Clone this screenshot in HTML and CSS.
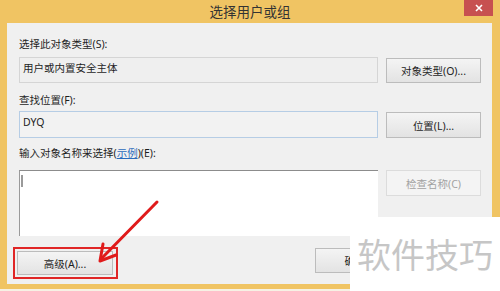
FILE: index.html
```html
<!DOCTYPE html>
<html lang="zh-CN">
<head>
  <meta charset="UTF-8" />
  <title>选择用户或组</title>
  <link rel="stylesheet" href="styles.css">
</head>
<body>

  <div class="window">
    <div class="titlebar">
      <span class="title">选择用户或组</span>
      <span class="close">
        <svg width="8" height="8" viewBox="0 0 8 8"><path d="M1 1L7 7M7 1L1 7" stroke="#fff" stroke-width="1.6"/></svg>
      </span>
    </div>

    <div class="panel">
      <div class="label first">选择此对象类型(S):</div>
      <div class="row">
        <div class="field readonly">用户或内置安全主体</div>
        <button class="btn">对象类型(O)...</button>
      </div>

      <div class="label second">查找位置(F):</div>
      <div class="row">
        <div class="field location">DYQ</div>
        <button class="btn tall">位置(L)...</button>
      </div>

      <div class="label third">输入对象名称来选择(<span class="link">示例</span>)(E):</div>
      <div class="row">
        <div class="listbox"><span class="caret"></span></div>
        <button class="btn disabled">检查名称(C)</button>
      </div>

      <div class="bottom">
        <div class="highlight">
          <button class="btn wide">高级(A)...</button>
        </div>
        <div class="actions">
          <button class="btn small">确定</button>
        </div>
      </div>
    </div>
  </div>

  <!-- overlays: annotation arrow and watermark -->
  <svg class="arrow" width="500" height="291" viewBox="0 0 500 291">
    <path d="M157 202L101 259" stroke="#e01b1b" stroke-width="3" stroke-linecap="round" fill="none"/>
    <path d="M103 244L100 261L116 255" stroke="#e01b1b" stroke-width="3" stroke-linecap="round" stroke-linejoin="round" fill="none"/>
  </svg>

  <div class="watermark">软件技巧</div>

</body>
</html>
```

FILE: styles.css
```css
body {
  margin: 0;
  width: 500px;
  height: 291px;
  overflow: hidden;
  position: relative;
  background: #f6f1e4;
  font-family: "Noto Sans", "Noto Sans CJK SC", sans-serif;
  font-size: 10.5px;
  color: #1e1e1e;
}

.window {
  background: #f0c463;
  height: 289px;
  display: flex;
  flex-direction: column;
}

.titlebar {
  position: relative;
  height: 23px;
  display: flex;
  justify-content: center;
  align-items: center;
}

.title {
  font-family: "Noto Sans CJK SC", sans-serif;
  font-size: 13.5px;
  line-height: 23px;
  color: #333;
}

.close {
  position: absolute;
  top: 0;
  right: 7px;
  width: 29px;
  height: 16px;
  background: #c75050;
  display: flex;
  align-items: center;
  justify-content: center;
}

.panel {
  background: #f0f0f0;
  height: 261px;
  margin: 0 8px 0 7px;
  padding: 14px 11px 0 12px;
  box-sizing: border-box;
}

.label {
  height: 14px;
  line-height: 14px;
  white-space: nowrap;
}

.label.first { margin-bottom: 6px; }
.label.second { margin-top: 10px; margin-bottom: 4px; }
.label.third { margin-top: 8px; margin-bottom: 10px; }

.link {
  color: #2a6bbd;
  text-decoration: underline;
}

.row {
  display: flex;
  gap: 8px;
  align-items: flex-start;
}

.field {
  width: 359px;
  height: 26px;
  box-sizing: border-box;
  padding: 3px 3px;
  line-height: 14px;
  background: #efefef;
  border: 1px solid #d5d5d5;
}

.field.location {
  height: 27px;
  background: #f2f2f2;
  border-color: #b6cde5;
}

.listbox {
  width: 359px;
  height: 66px;
  box-sizing: border-box;
  background: #fff;
  border-top: 1px solid #8c8c8c;
  border-left: 1px solid #9a9a9a;
  padding: 4px 0 0 1px;
}

.caret {
  display: block;
  width: 2px;
  height: 12px;
  background: #9a9a9a;
}

.btn {
  width: 95px;
  height: 25px;
  margin-top: 1px;
  padding: 0;
  font-family: inherit;
  font-size: 10.5px;
  color: #1e1e1e;
  background: linear-gradient(#f4f4f4, #e3e3e3);
  border: 1px solid #bcbcbc;
  border-radius: 0;
}

.btn.tall { height: 26px; }

.btn.disabled {
  margin-top: 0;
  height: 26px;
  color: #a2a2a2;
  background: #f4f4f4;
  border-color: #dcdcdc;
}

.bottom {
  display: flex;
  align-items: flex-start;
  margin-top: 11px;
}

.highlight {
  margin-left: -6px;
  padding: 2px 3px 2px 2px;
  border: 2px solid #e02626;
}

.btn.wide {
  display: block;
  width: 96px;
  height: 24px;
  margin: 0;
}

.actions {
  display: flex;
  margin-left: auto;
  margin-right: 86px;
  margin-top: 1px;
}

.btn.small {
  width: 80px;
  height: 25px;
  margin: 0;
}

.arrow {
  position: absolute;
  left: 0;
  top: 0;
}

.watermark {
  position: absolute;
  left: 350px;
  top: 217px;
  width: 150px;
  height: 74px;
  box-sizing: border-box;
  padding: 20px 0 0 7px;
  background: #fff;
  font-family: "Noto Sans CJK SC", sans-serif;
  font-size: 34px;
  line-height: 34px;
  color: #c6c6c6;
  white-space: nowrap;
}
```
